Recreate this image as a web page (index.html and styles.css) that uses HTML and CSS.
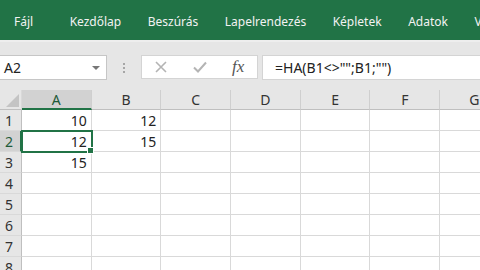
FILE: index.html
```html
<!DOCTYPE html>
<html lang="hu">
<head>
  <meta charset="UTF-8" />
  <title>Munkafüzet - Excel</title>
  <link rel="stylesheet" href="styles.css">
</head>
<body>

<nav class="ribbon">
  <span class="tab tab-file">Fájl</span>
  <span class="tab">Kezdőlap</span>
  <span class="tab">Beszúrás</span>
  <span class="tab">Lapelrendezés</span>
  <span class="tab">Képletek</span>
  <span class="tab">Adatok</span>
  <span class="tab">V</span>
</nav>

<div class="fbar">
  <div class="namebox">
    <span>A2</span>
    <span class="caret"></span>
  </div>
  <div class="grip"><i></i><i></i><i></i></div>
  <div class="fbtns">
    <svg width="14" height="14" viewBox="0 0 14 14"><path d="M2 2 L12 12 M12 2 L2 12" stroke="#b4b4b4" stroke-width="1.6" fill="none"/></svg>
    <svg width="16" height="14" viewBox="0 0 16 14"><path d="M2 7.5 L6 11.5 L14 2.5" stroke="#b4b4b4" stroke-width="2" fill="none"/></svg>
    <span class="fx">fx</span>
  </div>
  <div class="finput">=HA(B1&lt;&gt;"";B1;"")</div>
</div>

<div class="sheet">
  <div class="corner"><span></span></div>
  <div class="colhead sel">A</div>
  <div class="colhead">B</div>
  <div class="colhead">C</div>
  <div class="colhead">D</div>
  <div class="colhead">E</div>
  <div class="colhead">F</div>
  <div class="colhead">G</div>

  <div class="rowhead">1</div>
  <div class="cell">10</div><div class="cell">12</div><div class="cell"></div><div class="cell"></div><div class="cell"></div><div class="cell"></div><div class="cell"></div>

  <div class="rowhead sel">2</div>
  <div class="cell active">12</div><div class="cell">15</div><div class="cell"></div><div class="cell"></div><div class="cell"></div><div class="cell"></div><div class="cell"></div>

  <div class="rowhead">3</div>
  <div class="cell">15</div><div class="cell"></div><div class="cell"></div><div class="cell"></div><div class="cell"></div><div class="cell"></div><div class="cell"></div>

  <div class="rowhead">4</div>
  <div class="cell"></div><div class="cell"></div><div class="cell"></div><div class="cell"></div><div class="cell"></div><div class="cell"></div><div class="cell"></div>

  <div class="rowhead">5</div>
  <div class="cell"></div><div class="cell"></div><div class="cell"></div><div class="cell"></div><div class="cell"></div><div class="cell"></div><div class="cell"></div>

  <div class="rowhead">6</div>
  <div class="cell"></div><div class="cell"></div><div class="cell"></div><div class="cell"></div><div class="cell"></div><div class="cell"></div><div class="cell"></div>

  <div class="rowhead">7</div>
  <div class="cell"></div><div class="cell"></div><div class="cell"></div><div class="cell"></div><div class="cell"></div><div class="cell"></div><div class="cell"></div>

  <div class="rowhead">8</div>
  <div class="cell"></div><div class="cell"></div><div class="cell"></div><div class="cell"></div><div class="cell"></div><div class="cell"></div><div class="cell"></div>
</div>

</body>
</html>
```

FILE: styles.css
```css
:root {
  --green: #217346;
  --grid: #d9d9d9;
  --bar: #e6e6e6;
}
body {
  margin: 0;
  width: 480px;
  height: 270px;
  overflow: hidden;
  font-family: "Noto Sans", "Open Sans", sans-serif;
  background: white;
}
.ribbon {
  height: 40px;
  background: var(--green);
  display: flex;
  align-items: center;
  gap: 26.5px;
  padding-left: 14px;
  white-space: nowrap;
  overflow: hidden;
  border-bottom: 2px solid #eeeeee;
}
.tab {
  color: #f2f2f2;
  font-size: 12px;
  padding-top: 2px;
}
.tab-file {
  margin-right: 10px;
}
.fbar {
  height: 48px;
  background: var(--bar);
  display: flex;
  align-items: flex-start;
  padding-top: 13px;
  box-sizing: border-box;
}
.namebox {
  width: 107px;
  height: 25px;
  background: white;
  border: 1px solid #c6c6c6;
  border-left: none;
  box-sizing: border-box;
  display: flex;
  align-items: center;
  justify-content: space-between;
  padding: 0 6px 0 4px;
  font-size: 14px;
  color: #222;
}
.caret {
  width: 0;
  height: 0;
  border-left: 4px solid transparent;
  border-right: 4px solid transparent;
  border-top: 4px solid #777;
}
.grip {
  width: 34px;
  height: 25px;
  display: flex;
  flex-direction: column;
  align-items: center;
  justify-content: center;
  gap: 2px;
}
.grip i {
  width: 2px;
  height: 2px;
  background: #a6a6a6;
}
.fbtns {
  width: 117px;
  height: 24px;
  background: white;
  border: 1px solid #d4d4d4;
  box-sizing: border-box;
  display: flex;
  align-items: center;
  padding-left: 12px;
  gap: 24px;
}
.fx {
  font-family: "Liberation Serif", serif;
  font-style: italic;
  font-size: 17px;
  color: #555;
}
.finput {
  flex: 1;
  margin-left: 4px;
  height: 25px;
  background: white;
  border: 1px solid #d4d4d4;
  border-right: none;
  box-sizing: border-box;
  display: flex;
  align-items: center;
  padding-left: 12px;
  font-size: 14px;
  color: #222;
}
.sheet {
  display: grid;
  grid-template-columns: 22px repeat(7, 69.7px);
  grid-template-rows: 20px repeat(8, 21px);
  font-size: 14px;
  color: #222;
}
.corner {
  background: var(--bar);
  border-right: 1px solid var(--grid);
  border-bottom: 1px solid #bfbfbf;
  position: relative;
}
.corner span {
  position: absolute;
  right: 2px;
  bottom: 2px;
  width: 0;
  height: 0;
  border-left: 13px solid transparent;
  border-bottom: 13px solid #c4c4c4;
}
.colhead {
  background: var(--bar);
  border-right: 1px solid #cfcfcf;
  border-bottom: 1px solid #bfbfbf;
  display: flex;
  align-items: center;
  justify-content: center;
  color: #333;
}
.colhead.sel {
  background: #d2d2d2;
  border-bottom: 2px solid var(--green);
  color: #1e5a39;
}
.rowhead {
  background: var(--bar);
  border-right: 1px solid #bfbfbf;
  border-bottom: 1px solid var(--grid);
  display: flex;
  align-items: center;
  padding-left: 5px;
  color: #333;
}
.rowhead.sel {
  background: #d2d2d2;
  border-right: 2px solid var(--green);
  color: #1e5a39;
}
.cell {
  border-right: 1px solid var(--grid);
  border-bottom: 1px solid var(--grid);
  display: flex;
  align-items: center;
  justify-content: flex-end;
  padding-right: 4px;
}
.cell.active {
  position: relative;
  outline: 2px solid var(--green);
  outline-offset: -1px;
}
.cell.active::after {
  content: "";
  position: absolute;
  right: -3px;
  bottom: -3px;
  width: 5px;
  height: 5px;
  background: var(--green);
  border: 1px solid white;
  z-index: 2;
}
```
